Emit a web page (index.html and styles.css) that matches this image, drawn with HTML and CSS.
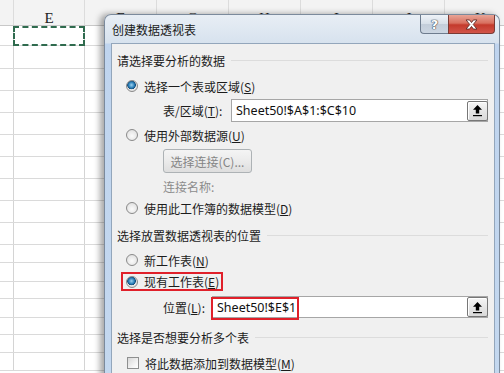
FILE: index.html
```html
<!DOCTYPE html>
<html lang="zh-CN">

<head>
    <meta charset="UTF-8">
    <title>创建数据透视表</title>
    <link rel="stylesheet" href="styles.css">
</head>

<body>
    <!-- Planilha ao fundo -->
    <div class="sheet">
        <div class="sheet-row col-head">
            <div class="cell c-d"></div>
            <div class="cell c-e">E</div>
            <div class="cell">F</div>
            <div class="cell">G</div>
            <div class="cell">H</div>
            <div class="cell">I</div>
            <div class="cell">J</div>
            <div class="cell">K</div>
        </div>
        <div class="sheet-row h20">
            <div class="cell c-d"></div>
            <div class="cell c-e"><div class="marquee"></div></div>
            <div class="cell"></div>
        </div>
        <div class="sheet-row h23"><div class="cell c-d"></div><div class="cell c-e"></div><div class="cell"></div></div>
        <div class="sheet-row"><div class="cell c-d"></div><div class="cell c-e"></div><div class="cell"></div></div>
        <div class="sheet-row"><div class="cell c-d"></div><div class="cell c-e"></div><div class="cell"></div></div>
        <div class="sheet-row"><div class="cell c-d"></div><div class="cell c-e"></div><div class="cell"></div></div>
        <div class="sheet-row"><div class="cell c-d"></div><div class="cell c-e"></div><div class="cell"></div></div>
        <div class="sheet-row"><div class="cell c-d"></div><div class="cell c-e"></div><div class="cell"></div></div>
        <div class="sheet-row"><div class="cell c-d"></div><div class="cell c-e"></div><div class="cell"></div></div>
        <div class="sheet-row"><div class="cell c-d"></div><div class="cell c-e"></div><div class="cell"></div></div>
        <div class="sheet-row"><div class="cell c-d"></div><div class="cell c-e"></div><div class="cell"></div></div>
        <div class="sheet-row h18"><div class="cell c-d"></div><div class="cell c-e"></div><div class="cell"></div></div>
        <div class="sheet-row h19"><div class="cell c-d"></div><div class="cell c-e"></div><div class="cell"></div></div>
        <div class="sheet-row h17"><div class="cell c-d"></div><div class="cell c-e"></div><div class="cell"></div></div>
        <div class="sheet-row h19"><div class="cell c-d"></div><div class="cell c-e"></div><div class="cell"></div></div>
        <div class="sheet-row h17"><div class="cell c-d"></div><div class="cell c-e"></div><div class="cell"></div></div>
        <div class="sheet-row h18"><div class="cell c-d"></div><div class="cell c-e"></div><div class="cell"></div></div>
        <div class="sheet-row h18"><div class="cell c-d"></div><div class="cell c-e"></div><div class="cell"></div></div>
    </div>

    <!-- Janela do diálogo -->
    <div class="dialog">
        <div class="titlebar">
            <span class="title">创建数据透视表</span>
            <div class="caption-btns">
                <span class="btn-help">?</span>
                <span class="btn-close">
                    <svg width="13" height="11" viewBox="0 0 12 10">
                        <path d="M1 0.8 H4.2 L6 3.2 L7.8 0.8 H11 L7.6 5 L11 9.2 H7.8 L6 6.8 L4.2 9.2 H1 L4.4 5 Z" fill="#fff" stroke="#5a2a26" stroke-width="0.8" />
                    </svg>
                </span>
            </div>
        </div>

        <div class="client">
            <div class="group-head first"><span>请选择要分析的数据</span><i></i></div>
            <div class="opt opt-range"><span class="radio checked"></span>选择一个表或区域(<u>S</u>)</div>
            <div class="field field-range">
                <span class="field-label">表/区域(<u>T</u>):</span>
                <div class="ref-box">
                    <span class="ref-text">Sheet50!$A$1:$C$10</span>
                    <span class="ref-btn">
                        <svg width="13" height="13" viewBox="0 0 13 13">
                            <path d="M6.5 1 L11 5.8 H8.2 V9.5 H4.8 V5.8 H2 Z" fill="#000" />
                            <rect x="2" y="11" width="9" height="1.2" fill="#000" />
                        </svg>
                    </span>
                </div>
            </div>
            <div class="opt opt-ext"><span class="radio"></span>使用外部数据源(<u>U</u>)</div>
            <div class="conn-row"><span class="btn-conn">选择连接(C)...</span></div>
            <div class="conn-name">连接名称:</div>
            <div class="opt opt-model"><span class="radio"></span>使用此工作簿的数据模型(<u>D</u>)</div>

            <div class="group-head second"><span>选择放置数据透视表的位置</span><i></i></div>
            <div class="opt opt-new"><span class="radio"></span>新工作表(<u>N</u>)</div>
            <div class="opt opt-exist">
                <span class="mark"><span class="radio checked"></span>现有工作表(<u>E</u>)</span>
            </div>
            <div class="field field-loc">
                <span class="field-label">位置(<u>L</u>):</span>
                <div class="ref-box">
                    <span class="ref-text">Sheet50!$E$1</span><span class="caret"></span>
                    <span class="mark-box"></span>
                    <span class="ref-btn">
                        <svg width="13" height="13" viewBox="0 0 13 13">
                            <path d="M6.5 1 L11 5.8 H8.2 V9.5 H4.8 V5.8 H2 Z" fill="#000" />
                            <rect x="2" y="11" width="9" height="1.2" fill="#000" />
                        </svg>
                    </span>
                </div>
            </div>

            <div class="group-head third"><span>选择是否想要分析多个表</span><i></i></div>
            <div class="opt opt-check"><span class="checkbox"></span>将此数据添加到数据模型(<u>M</u>)</div>
        </div>
    </div>
</body>

</html>
```

FILE: styles.css
```css
/* Reset básico */
* {
    margin: 0;
    padding: 0;
    box-sizing: border-box;
}

body {
    width: 504px;
    height: 373px;
    overflow: hidden;
    position: relative;
    background: #fff;
    font-family: "Noto Sans CJK SC", "Noto Sans", sans-serif;
    font-size: 12px;
    color: #1c1c1c;
}

u {
    text-decoration: underline;
    text-underline-offset: 1px;
}

/* Planilha */
.sheet-row {
    display: flex;
    height: 22px;
    border-bottom: 1px solid #dadada;
}

.sheet-row.h17 { height: 17px; }
.sheet-row.h18 { height: 18px; }
.sheet-row.h19 { height: 19px; }
.sheet-row.h20 { height: 20px; }
.sheet-row.h23 { height: 23px; }

.cell {
    flex: 0 0 72px;
    border-right: 1px solid #d4d4d4;
}

.c-d {
    flex-basis: 14px;
}

.c-e {
    flex-basis: 71px;
}

.col-head {
    height: 26px;
    background: #f3f3f3;
    border-bottom: 1px solid #c8c8c8;
}

.col-head .cell {
    display: flex;
    justify-content: center;
    align-items: flex-start;
    padding-top: 11px;
    font-family: "Liberation Serif", serif;
    font-size: 15px;
    line-height: 1;
    color: #222;
    border-right-color: #dcdcdc;
}

.marquee {
    width: calc(100% + 2px);
    height: calc(100% + 1px);
    margin-left: -1px;
    border: 2px dashed #2f6b4e;
}

/* Diálogo */
.dialog {
    position: absolute;
    left: 104px;
    top: 14px;
    width: 396px;
    height: 372px;
    border: 1px solid #7b8a9c;
    border-bottom: none;
    border-radius: 7px 7px 0 0;
    padding: 0 4px 0 6px;
    background: linear-gradient(to bottom, #e8eef5 0, #d7e2ee 28px, #bfd4ee 29px, #c4d8ef 100%);
    box-shadow: -4px 0 6px rgba(0, 0, 0, 0.35);
}

.titlebar {
    height: 28px;
    display: flex;
    align-items: center;
}

.title {
    padding-left: 1px;
    font-size: 12px;
    color: #1a1a1a;
}

.caption-btns {
    margin-left: auto;
    align-self: flex-start;
    display: flex;
}

.btn-help,
.btn-close {
    height: 19px;
    display: flex;
    align-items: center;
    justify-content: center;
    border: 1px solid #6e7c8e;
    border-top: none;
}

.btn-help {
    width: 28px;
    border-radius: 0 0 0 4px;
    border-right: none;
    background: linear-gradient(to bottom, #eef2f7 0, #d7dfe8 50%, #c3cdd9 51%, #ccd6e2 100%);
    font-family: "DejaVu Sans", sans-serif;
    font-weight: bold;
    font-size: 13px;
    color: #fff;
    text-shadow: 0 0 1px #3a4250, 0 0 1px #3a4250, 0 0 1px #3a4250;
}

.btn-close {
    width: 47px;
    border-color: #7a3a34;
    border-radius: 0 0 4px 0;
    background: linear-gradient(to bottom, #e8a496 0, #d8705f 45%, #c43a2c 55%, #d2554a 100%);
}

.client {
    height: 330px;
    background: #f0f0f0;
    border: 1px solid #93a6bb;
    border-bottom: none;
    padding: 7px 6px 0 5px;
}

/* Cabeçalhos de grupo */
.group-head {
    display: flex;
    align-items: center;
    height: 18px;
}

.group-head i {
    flex: 1;
    height: 1px;
    margin-left: 6px;
    background: #dcdcdc;
}

.group-head.second { margin-top: 8px; }
.group-head.third { margin-top: 10px; }

/* Opções */
.opt {
    display: flex;
    align-items: center;
    height: 20px;
    padding-left: 9px;
}

.opt-range { margin-top: 7px; }
.opt-ext { margin-top: 3px; }
.opt-model { margin-top: 2px; }
.opt-new { margin-top: 6px; }
.opt-exist { margin-top: 2px; padding-left: 4px; align-items: flex-start; }
.opt-check { margin-top: 7px; }

.radio,
.checkbox {
    width: 12px;
    height: 12px;
    margin-right: 6px;
    border: 1px solid #8a8a8a;
    flex: none;
}

.radio {
    border-radius: 50%;
    background: radial-gradient(circle at 50% 60%, #fbfbfb 0, #e4e4e4 70%, #d4d4d4 100%);
}

.radio.checked {
    background: radial-gradient(circle at 45% 40%, #9fd2ef 0, #2a7fb8 35%, #174e7c 50%, #e8e8e8 56%, #d6d6d6 100%);
}

.checkbox {
    margin-left: 1px;
    border-color: #8e8f8f;
    background: linear-gradient(135deg, #d8d8d8 0, #f6f6f6 70%, #fff 100%);
}

.mark {
    display: flex;
    align-items: center;
    height: 19px;
    border: 2px solid #e0202a;
    padding: 0 2px 0 3px;
}

/* Campos de referência */
.field {
    display: flex;
    align-items: center;
    padding-left: 46px;
}

.field-range {
    height: 23px;
    margin-top: 3px;
}

.field-loc {
    height: 22px;
    margin-top: 4px;
}

.field-range .field-label { width: 68px; }
.field-loc .field-label { width: 49px; }

.ref-box {
    flex: 1;
    height: 100%;
    position: relative;
    display: flex;
    align-items: center;
    padding-left: 4px;
    background: #fff;
    border: 1px solid #a6a6a6;
}

.ref-text {
    font-family: "Noto Sans", sans-serif;
    font-size: 12.5px;
    color: #111;
}

.caret {
    width: 1px;
    height: 15px;
    margin-left: 1px;
    background: #000;
}

.mark-box {
    position: absolute;
    left: -2px;
    top: 0;
    width: 88px;
    height: 23px;
    border: 2px solid #e0202a;
}

.ref-btn {
    margin-left: auto;
    margin-right: -1px;
    width: 21px;
    height: 20px;
    display: flex;
    align-items: center;
    justify-content: center;
    border: 1px solid #777;
    border-radius: 2px;
    background: linear-gradient(to bottom, #f6f6f6 0, #e6e6e6 50%, #d9d9d9 100%);
    box-shadow: inset 1px 1px 0 #fff;
}

/* Conexão (desabilitado) */
.conn-row {
    margin-top: 4px;
    padding-left: 46px;
    display: flex;
}

.btn-conn {
    width: 89px;
    height: 24px;
    display: flex;
    align-items: center;
    justify-content: center;
    border: 1px solid #adb2b5;
    border-radius: 3px;
    background: linear-gradient(to bottom, #f4f4f4 0, #ebebeb 50%, #dedede 100%);
    color: #858585;
}

.conn-name {
    margin-top: 5px;
    height: 18px;
    line-height: 18px;
    padding-left: 46px;
    color: #8c8c8c;
}
```
